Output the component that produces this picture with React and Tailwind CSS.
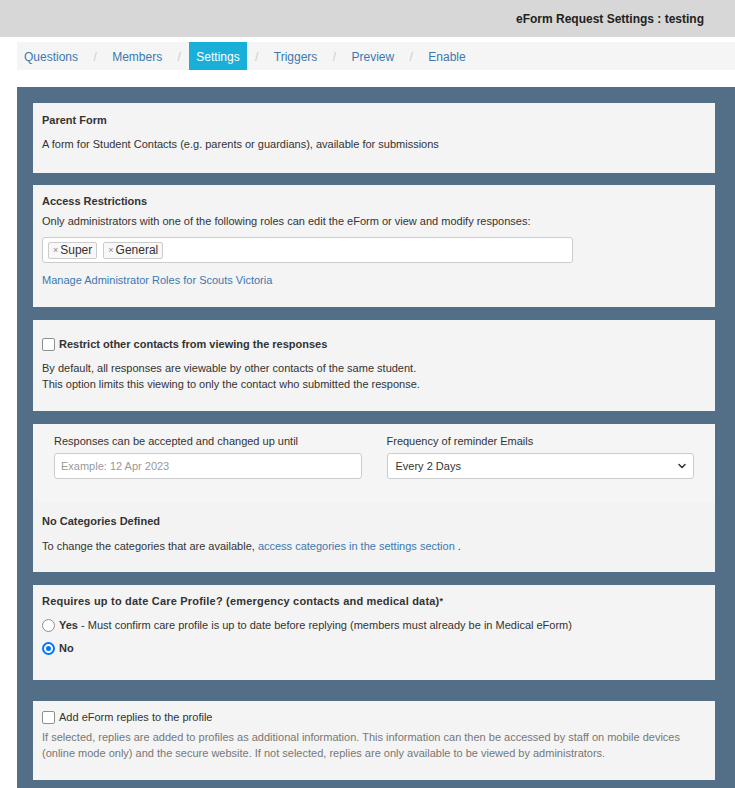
import React from "react";
import { ChevronDown } from "lucide-react";

const tabs = ["Questions", "Members", "Settings", "Triggers", "Preview", "Enable"];

function Checkbox() {
  return <span className="inline-block w-[13px] h-[13px] rounded-[2px] border border-[#8f8f8f] bg-white shrink-0" />;
}

function Radio({ checked }) {
  if (checked) {
    return (
      <span className="inline-flex w-[13px] h-[13px] rounded-full bg-[#0075ff] items-center justify-center shrink-0">
        <span className="w-[9px] h-[9px] rounded-full border-2 border-white bg-[#0075ff]" />
      </span>
    );
  }
  return <span className="inline-block w-[13px] h-[13px] rounded-full border border-[#8f8f8f] bg-white shrink-0" />;
}

function Tag({ label }) {
  return (
    <span className="inline-flex items-center h-[17px] px-[4px] border border-[#ccc] rounded-[2px] bg-[#f8f8f8] text-[12px] text-[#333]">
      <span className="text-[9px] text-[#888] mr-[2px]">×</span>
      {label}
    </span>
  );
}

export default function App() {
  return (
    <div className="min-h-screen bg-white text-[11px] leading-[16px] text-[#333] font-['Liberation_Sans',Arial,sans-serif] overflow-hidden">
      <div className="h-[37px] bg-[#d7d7d7] flex items-center justify-end pr-[31px]">
        <span className="text-[12px] font-bold text-[#222]">eForm Request Settings : testing</span>
      </div>

      <nav className="mt-[5px] ml-[17px] h-[28px] bg-[#f5f5f5] flex items-stretch text-[12px]">
        {tabs.map((t, i) => (
          <React.Fragment key={t}>
            {i > 0 && <span className="flex items-center pt-[2px] px-[8.4px] text-[#ccc]">/</span>}
            <span
              className={
                t === "Settings"
                  ? "flex items-center pt-[2px] px-[7px] bg-[#1aafd9] text-white"
                  : "flex items-center pt-[2px] px-[7px] text-[#3c78b0]"
              }
            >
              {t}
            </span>
          </React.Fragment>
        ))}
      </nav>

      <div className="mt-[17px] ml-[17px] bg-[#536e87] pt-[16px] pl-[16px] pr-[20px] pb-[20px] flex flex-col">
        {/* Parent form */}
        <div className="bg-[#f4f4f4] px-[9px] pt-[9px] pb-[21px]">
          <div className="font-bold">Parent Form</div>
          <div className="mt-[8px]">A form for Student Contacts (e.g. parents or guardians), available for submissions</div>
        </div>

        {/* Access restrictions */}
        <div className="mt-[12px] bg-[#f4f4f4] px-[9px] pt-[8px] pb-[19px]">
          <div className="font-bold">Access Restrictions</div>
          <div className="mt-[4px]">Only administrators with one of the following roles can edit the eForm or view and modify responses:</div>
          <div className="mt-[8px] w-[531px] h-[26px] bg-white border border-[#ccc] rounded-[3px] flex items-center gap-[6px] px-[5px]">
            <Tag label="Super" />
            <Tag label="General" />
          </div>
          <div className="mt-[9px] text-[#3c78b0]">Manage Administrator Roles for Scouts Victoria</div>
        </div>

        {/* Restrict contacts */}
        <div className="mt-[13px] bg-[#f4f4f4] px-[9px] pt-[16px] pb-[19px]">
          <div className="flex items-center gap-[4px] font-bold">
            <Checkbox />
            <span>Restrict other contacts from viewing the responses</span>
          </div>
          <div className="mt-[8px]">
            By default, all responses are viewable by other contacts of the same student.
            <br />
            This option limits this viewing to only the contact who submitted the response.
          </div>
        </div>

        {/* Dates & categories */}
        <div className="mt-[13px] bg-[#f3f3f3] pb-[18px]">
          <div className="bg-[#f5f5f5] px-[21px] pt-[9px] pb-[23px] grid grid-cols-2 gap-[25px]">
            <div>
              <div>Responses can be accepted and changed up until</div>
              <div className="mt-[4px] h-[26px] bg-white border border-[#ccc] rounded-[3px] flex items-center px-[6px] text-[#999]">
                Example: 12 Apr 2023
              </div>
            </div>
            <div>
              <div>Frequency of reminder Emails</div>
              <div className="mt-[4px] h-[26px] bg-white border border-[#ccc] rounded-[3px] flex items-center justify-between pl-[8px] pr-[5px]">
                <span>Every 2 Days</span>
                <ChevronDown className="w-[12px] h-[12px] text-[#333]" strokeWidth={3} />
              </div>
            </div>
          </div>
          <div className="px-[9px] mt-[11px]">
            <div className="font-bold">No Categories Defined</div>
            <div className="mt-[9px]">
              To change the categories that are available, <span className="text-[#3c78b0]">access categories in the settings section</span> .
            </div>
          </div>
        </div>

        {/* Care profile */}
        <div className="mt-[13px] bg-[#f4f4f4] px-[9px] pt-[8px] pb-[24px]">
          <div className="font-bold tracking-[0.2px]">
            Requires up to date Care Profile? (emergency contacts and medical data)<span className="text-[9px] align-top">*</span>
          </div>
          <div className="mt-[8px] flex items-center gap-[4px]">
            <Radio />
            <span>
              <span className="font-bold">Yes</span> - Must confirm care profile is up to date before replying (members must already be in Medical eForm)
            </span>
          </div>
          <div className="mt-[7px] flex items-center gap-[4px] font-bold">
            <Radio checked />
            <span>No</span>
          </div>
        </div>

        {/* Add replies */}
        <div className="mt-[21px] bg-[#f4f4f4] px-[9px] pt-[8px] pb-[19px]">
          <div className="flex items-center gap-[4px]">
            <Checkbox />
            <span>Add eForm replies to the profile</span>
          </div>
          <div className="mt-[4px] text-[#777]">
            If selected, replies are added to profiles as additional information. This information can then be accessed by staff on mobile devices (online mode only) and the secure website. If not selected, replies are only available to be viewed by administrators.
          </div>
        </div>
      </div>
    </div>
  );
}
